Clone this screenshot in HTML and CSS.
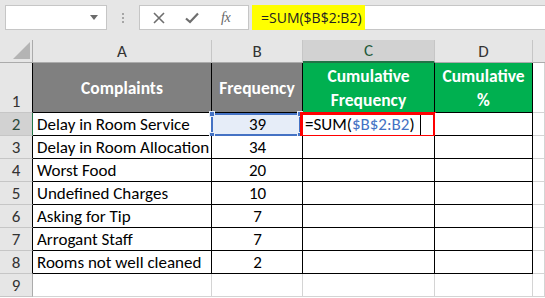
FILE: index.html
```html
<!DOCTYPE html>
<html>
<head>
<meta charset="utf-8">
<link rel="stylesheet" href="styles.css">
</head>
<body>
<div class="app">
  <div class="toolbar">
    <div class="namebox">
      <svg class="caret" width="8" height="5" viewBox="0 0 8 5"><path d="M0 0H8L4 5Z" fill="#6b6b6b"/></svg>
    </div>
    <div class="grip"><i></i><i></i><i></i></div>
    <div class="btns">
      <svg class="ico" width="12" height="12" viewBox="0 0 12 12"><path d="M1 1L11 11M11 1L1 11" stroke="#6e6e6e" stroke-width="1.6" fill="none"/></svg>
      <svg class="ico" width="14" height="12" viewBox="0 0 14 12"><path d="M1 6.5L5 10L13 1.5" stroke="#6e6e6e" stroke-width="2.2" fill="none"/></svg>
      <span class="fx">fx</span>
    </div>
    <div class="formula"><span class="hl">=SUM($B$2:B2)</span></div>
  </div>

  <div class="sheet">
    <!-- column headers -->
    <div class="corner"><svg width="17" height="17" viewBox="0 0 17 17"><path d="M17 0V17H0Z" fill="#b4b4b4"/></svg></div>
    <div class="ch">A</div>
    <div class="ch">B</div>
    <div class="ch sel">C</div>
    <div class="ch">D</div>
    <div class="ch last"></div>

    <!-- row 1 -->
    <div class="rh tb">1</div>
    <div class="cell t hd grey">Complaints</div>
    <div class="cell t hd grey">Frequency</div>
    <div class="cell t hd green">Cumulative<br>Frequency</div>
    <div class="cell t hd green">Cumulative<br>%</div>
    <div class="cell"></div>

    <!-- row 2 -->
    <div class="rh rsel">2</div>
    <div class="cell t">Delay in Room Service</div>
    <div class="cell t num refcell">39
      <span class="refbox"><i class="h tl"></i><i class="h tr"></i><i class="h bl"></i><i class="h br"></i></span>
    </div>
    <div class="cell t edit"><span>=SUM(<span class="ref">$B$2:B2</span>)</span><span class="cursor"></span><span class="redbox"></span></div>
    <div class="cell t"></div>
    <div class="cell"></div>

    <div class="rh tb">3</div>
    <div class="cell t">Delay in Room Allocation</div>
    <div class="cell t num">34</div>
    <div class="cell t"></div>
    <div class="cell t"></div>
    <div class="cell"></div>

    <div class="rh tb">4</div>
    <div class="cell t">Worst Food</div>
    <div class="cell t num">20</div>
    <div class="cell t"></div>
    <div class="cell t"></div>
    <div class="cell"></div>

    <div class="rh tb">5</div>
    <div class="cell t">Undefined Charges</div>
    <div class="cell t num">10</div>
    <div class="cell t"></div>
    <div class="cell t"></div>
    <div class="cell"></div>

    <div class="rh tb">6</div>
    <div class="cell t">Asking for Tip</div>
    <div class="cell t num">7</div>
    <div class="cell t"></div>
    <div class="cell t"></div>
    <div class="cell"></div>

    <div class="rh tb">7</div>
    <div class="cell t">Arrogant Staff</div>
    <div class="cell t num">7</div>
    <div class="cell t"></div>
    <div class="cell t"></div>
    <div class="cell"></div>

    <div class="rh tb">8</div>
    <div class="cell t">Rooms not well cleaned</div>
    <div class="cell t num">2</div>
    <div class="cell t"></div>
    <div class="cell t"></div>
    <div class="cell"></div>

    <div class="rh">9</div>
    <div class="cell"></div>
    <div class="cell"></div>
    <div class="cell"></div>
    <div class="cell"></div>
    <div class="cell"></div>
  </div>
</div>
</body>
</html>
```

FILE: styles.css
```css
* { box-sizing: border-box; }
html, body { margin: 0; padding: 0; background: #fff; }
body { width: 545px; height: 298px; overflow: hidden; font-family: Carlito, Lato, "Liberation Sans", sans-serif; }

.app { width: 545px; }

.toolbar {
  height: 40px;
  background: #e6e6e6;
  display: flex;
  align-items: flex-start;
  padding: 5px 0 0 5px;
}
.namebox {
  width: 102px;
  height: 25px;
  background: #fff;
  border: 1px solid #c6c6c6;
  display: flex;
  align-items: center;
  justify-content: flex-end;
  padding-right: 8px;
}
.grip {
  width: 32px;
  height: 25px;
  display: flex;
  flex-direction: column;
  align-items: center;
  justify-content: center;
  gap: 2px;
}
.grip i { display: block; width: 2px; height: 2px; background: #a6a6a6; }
.btns {
  width: 110px;
  height: 25px;
  background: #fff;
  border: 1px solid #c6c6c6;
  display: flex;
  align-items: center;
  padding-left: 13px;
  gap: 0;
}
.btns .ico:first-child { margin-right: 20px; }
.btns .ico:nth-child(2) { margin-right: 22px; }
.fx {
  font-family: "Liberation Serif", serif;
  font-style: italic;
  font-size: 14px;
  color: #666;
  letter-spacing: -0.5px;
}
.formula {
  flex: 1;
  height: 25px;
  margin-left: 3px;
  background: #fff;
  border: 1px solid #c6c6c6;
  border-right: none;
  display: flex;
}
.formula .hl {
  display: flex;
  align-items: center;
  background: #ffff00;
  width: 113px;
  margin: -1px 0 -1px -1px;
  padding-left: 9px;
  font-family: "Open Sans", sans-serif;
  font-size: 14px;
  color: #222;
}

.sheet {
  display: grid;
  grid-template-columns: 33px 179px 91px 132px 98px 12px;
  grid-template-rows: 23px 50px repeat(8, 23px);
}

.corner {
  background: #e6e6e6;
  border-right: 1px solid #ababab;
  border-bottom: 1px solid #ababab;
  display: flex;
  align-items: flex-end;
  justify-content: flex-end;
  padding: 0 2px 3px 0;
}
.ch {
  background: #e6e6e6;
  border-right: 1px solid #c6c6c6;
  border-bottom: 1px solid #ababab;
  display: flex;
  align-items: center;
  justify-content: center;
  font-size: 17px;
  color: #333;
}
.ch.sel { background: #d2d2d2; border-bottom: 2px solid #217346; color: #1f5a3a; }
.ch.last { border-right: none; }

.rh {
  background: #e6e6e6;
  border-right: 1px solid #ababab;
  border-bottom: 1px solid #c6c6c6;
  display: flex;
  align-items: flex-end;
  justify-content: center;
  font-size: 17px;
  line-height: 20px;
  color: #333;
  padding-bottom: 0;
}
.rh.tb { border-right-color: #000; }
.rh.rsel { background: #d2d2d2; border-right: 1px solid #217346; color: #2a4a3a; }

.cell {
  position: relative;
  background: #fff;
  border-right: 1px solid #d4d4d4;
  border-bottom: 1px solid #d4d4d4;
  display: flex;
  align-items: flex-end;
  padding: 0 3px 0 4px;
  font-size: 17px;
  line-height: 20px;
  color: #000;
  white-space: nowrap;
}
.cell.t { border-right-color: #000; border-bottom-color: #000; }
.cell.num { justify-content: center; }

.cell.hd {
  align-items: center;
  justify-content: center;
  text-align: center;
  color: #fff;
  font-weight: bold;
  font-size: 17.5px;
  line-height: 24px;
  padding: 0;
}
.grey { background: #808080; }
.green { background: #00b050; }

.refcell { background: #e6edf8; }
.refbox {
  position: absolute;
  left: -1px; top: 0; right: 1px; bottom: -1px;
  border: 2px solid #4472c4;
}
.refbox .h {
  position: absolute;
  width: 6px; height: 6px;
  background: #4472c4;
  border: 1px solid #e6edf8;
}
.h.tl { left: -4px; top: -4px; }
.h.tr { right: -4px; top: -4px; }
.h.bl { left: -4px; bottom: -4px; }
.h.br { right: -4px; bottom: -4px; }

.edit { padding-left: 2px; overflow: visible; }
.ref { color: #4472c4; }
.cursor { display: inline-block; width: 1px; height: 20px; background: #000; margin-left: 5px; margin-bottom: 0; }
.redbox {
  position: absolute;
  left: -3px; top: -1px; right: -2px; bottom: -3px;
  border: 3px solid #ff0000;
}
```
